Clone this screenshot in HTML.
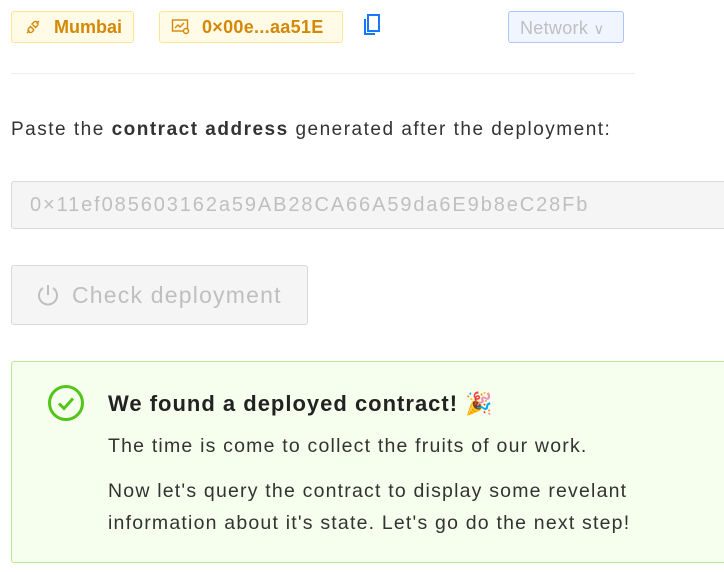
<!DOCTYPE html>
<html><head><meta charset="utf-8"><style>
body{margin:0;width:724px;height:572px;overflow:hidden;background:#fff;font-family:"Liberation Sans",sans-serif;position:relative}
.a{position:absolute;box-sizing:border-box;white-space:nowrap}
.tag{background:#fffbe6;border:1px solid #ffe58f;border-radius:3px;color:#d48806;font-weight:bold;font-size:18px;display:flex;align-items:center;height:32px;top:11px}
</style></head><body>
<div class="a tag" style="left:11px;width:123px;padding-left:12px">
<svg width="18" height="18" viewBox="0 0 18 18" fill="none" stroke="#d48806" stroke-width="1.4"><path d="M3 15l2.5-2.5M15 3l-2.5 2.5M6 8l4 4M8 6l2-2a2.5 2.5 0 0 1 3.5 3.5l-2 2zM10 12l-2 2a2.5 2.5 0 0 1-3.5-3.5l2-2"/></svg>
<span style="margin-left:12px">Mumbai</span></div>
<div class="a tag" style="left:159px;width:184px;padding-left:11px">
<svg width="20" height="18" viewBox="0 0 20 18" fill="none" stroke="#d48806" stroke-width="1.4"><rect x="1.5" y="2" width="15" height="11"/><path d="M4 10l3-3 2 2 4-4"/><circle cx="15" cy="13" r="2.5" fill="#fffbe6"/></svg>
<span style="margin-left:11px;letter-spacing:0.3px">0×00e...aa51E</span></div>
<svg class="a" style="left:362px;top:13px" width="20" height="24" viewBox="0 0 20 24" fill="none" stroke="#1677ff" stroke-width="2"><rect x="6" y="2" width="11" height="16"/><path d="M3 6v15h10"/></svg>
<div class="a" style="left:508px;top:11px;width:116px;height:32px;background:#f0f5ff;border:1px solid #adc6ff;border-radius:3px;color:#bfbfbf;font-size:18px;padding:6px 0 0 11px;letter-spacing:0.3px">Network <span style="font-size:15px">∨</span></div>
<div class="a" style="left:11px;top:73px;width:624px;height:1px;background:#eee"></div>
<div class="a" style="left:11px;top:119px;font-size:19px;color:#333;letter-spacing:1.5px">Paste the <b>contract address</b> generated after the deployment:</div>
<div class="a" style="left:11px;top:181px;width:730px;height:48px;background:#f5f5f5;border:1px solid #d9d9d9;border-radius:3px;color:#bfbfbf;font-size:20px;padding:12px 0 0 18px;letter-spacing:1.9px">0×11ef085603162a59AB28CA66A59da6E9b8eC28Fb</div>
<div class="a" style="left:11px;top:265px;width:297px;height:60px;background:#f5f5f5;border:1px solid #d9d9d9;border-radius:3px;color:#bfbfbf;font-size:23px;padding:16px 0 0 23px;display:flex;align-items:flex-start">
<svg width="26" height="26" viewBox="0 0 26 26" fill="none" stroke="#bfbfbf" stroke-width="2"><path d="M8 6a9 9 0 1 0 10 0"/><path d="M13 3v10"/></svg><span style="margin-left:11px;letter-spacing:1.2px">Check deployment</span></div>
<div class="a" style="left:11px;top:361px;width:730px;height:202px;background:#f6ffed;border:1px solid #b7eb8f;border-radius:3px"></div>
<svg class="a" style="left:47px;top:384px" width="38" height="38" viewBox="0 0 38 38" fill="none" stroke="#52c41a" stroke-width="3"><circle cx="19" cy="19" r="16.5"/><path d="M12 19.5l5 5 9-10"/></svg>
<div class="a" style="left:108px;top:391px;font-size:22px;font-weight:bold;color:#222;letter-spacing:1px">We found a deployed contract! 🎉</div>
<div class="a" style="left:108px;top:430px;font-size:19.5px;color:#333;line-height:32px;width:610px;letter-spacing:1.2px">The time is come to collect the fruits of our work.<div style="margin-top:13px">Now let's query the contract to display some revelant<br>information about it's state. Let's go do the next step!</div></div>
</body></html>
